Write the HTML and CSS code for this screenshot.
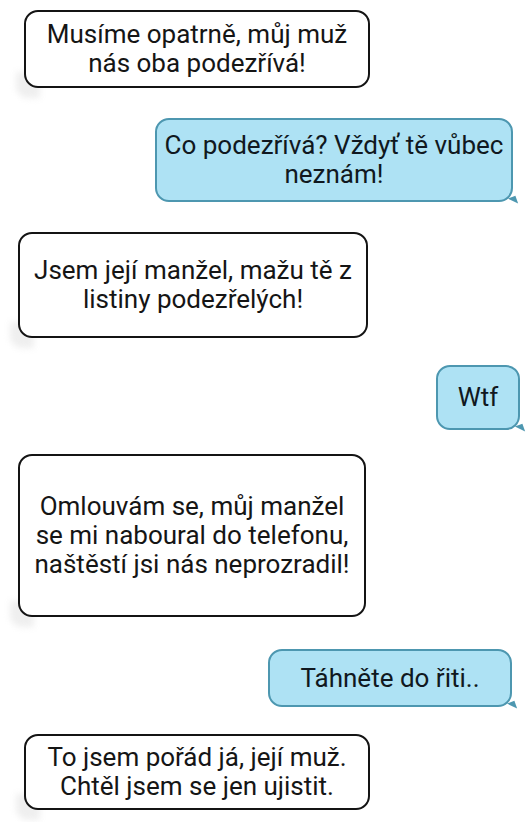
FILE: index.html
```html
<!DOCTYPE html>
<html lang="cs">
<head>
<meta charset="utf-8">
<link rel="stylesheet" href="styles.css">
</head>
<body>
<div class="chat">
  <div class="msg in m1">Musíme opatrně, můj muž<br>nás oba podezřívá!</div>
  <div class="msg out m2">Co podezřívá? Vždyť tě vůbec<br>neznám!</div>
  <div class="msg in m3">Jsem její manžel, mažu tě z<br>listiny podezřelých!</div>
  <div class="msg out m4">Wtf</div>
  <div class="msg in m5">Omlouvám se, můj manžel<br>se mi naboural do telefonu,<br>naštěstí jsi nás neprozradil!</div>
  <div class="msg out m6">Táhněte do řiti..</div>
  <div class="msg in m7">To jsem pořád já, její muž.<br>Chtěl jsem se jen ujistit.</div>
</div>
</body>
</html>
```
FILE: styles.css
```css
html, body {
  margin: 0;
  padding: 0;
  background: #ffffff;
}
.chat {
  width: 526px;
  height: 822px;
  display: flex;
  flex-direction: column;
  font-family: Roboto, "Noto Sans", sans-serif;
  font-size: 26px;
  line-height: 29px;
  color: #151515;
  padding-top: 10px;
  box-sizing: border-box;
  overflow: hidden;
  position: relative;
  z-index: 0;
}
.msg {
  position: relative;
  box-sizing: border-box;
  display: flex;
  align-items: center;
  justify-content: center;
  text-align: center;
  border-radius: 14px;
  white-space: nowrap;
}
.in {
  align-self: flex-start;
  background: #ffffff;
  border: 2px solid #141414;
}
.in::before {
  content: "";
  position: absolute;
  left: -10px;
  bottom: -12px;
  width: 24px;
  height: 26px;
  background: #efefef;
  filter: blur(3px);
  border-radius: 0 0 0 12px;
  z-index: -1;
}
.out {
  align-self: flex-end;
  background: #aee2f4;
  border: 2px solid #4d97b0;
  color: #101820;
}
.out::after {
  content: "";
  position: absolute;
  right: -6px;
  bottom: -5px;
  width: 0;
  height: 0;
  border-left: 8px solid transparent;
  border-top: 8px solid #4d97b0;
  transform: rotate(-20deg);
}
.m1 { margin-left: 24px; width: 346px; height: 78px; }
.m2 { margin-top: 30px; margin-right: 13px; width: 358px; height: 84px; }
.m3 { margin-top: 30px; margin-left: 18px; width: 350px; height: 106px; }
.m4 { margin-top: 27px; margin-right: 6px; width: 84px; height: 65px; }
.m5 { margin-top: 24px; margin-left: 18px; width: 348px; height: 163px; }
.m6 { margin-top: 32px; margin-right: 14px; width: 244px; height: 58px; }
.m7 { margin-top: 27px; margin-left: 24px; width: 346px; height: 76px; }
```
